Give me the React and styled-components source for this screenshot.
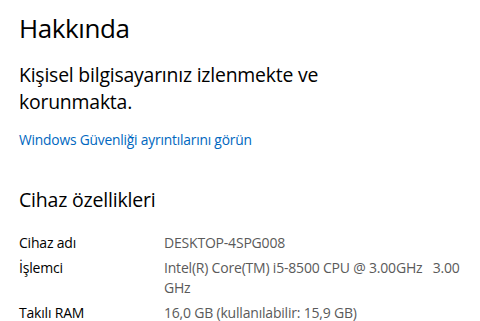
import React from 'react'
import styled, { createGlobalStyle } from 'styled-components'

const GlobalStyle = createGlobalStyle`
  html, body {
    margin: 0;
    padding: 0;
    background: #ffffff;
  }
  body {
    font-family: 'Open Sans', 'Noto Sans', sans-serif;
    color: #000000;
  }
`

const Page = styled.div`
  width: 480px;
  height: 321px;
  overflow: hidden;
  padding: 8px 0 0 19px;
  box-sizing: border-box;
`

const Title = styled.h1`
  margin: 0;
  font-size: 26px;
  font-weight: 400;
  line-height: 40px;
  letter-spacing: -0.4px;
`

const Status = styled.p`
  margin: 13px 0 0;
  width: 320px;
  font-size: 19.4px;
  font-weight: 400;
  line-height: 27px;
  letter-spacing: -0.2px;
`

const Link = styled.a`
  display: inline-block;
  margin-top: 15px;
  color: #0067c0;
  font-size: 13.8px;
  line-height: 20px;
  text-decoration: none;
  letter-spacing: -0.2px;
  cursor: pointer;
`

const SectionTitle = styled.h2`
  margin: 36px 0 0;
  font-size: 19.5px;
  font-weight: 400;
  line-height: 28px;
  letter-spacing: -0.2px;
`

const Specs = styled.dl`
  margin: 19px 0 0;
  display: grid;
  grid-template-columns: 145px 305px;
  row-gap: 5px;
  font-size: 14px;
  line-height: 20px;
  letter-spacing: -0.2px;
`

const Label = styled.dt`
  margin: 0;
  color: #000000;
`

const Value = styled.dd`
  margin: 0;
  color: #5a5a5a;
  white-space: pre-wrap;
`

const specs = [
  ['Cihaz adı', 'DESKTOP-4SPG008'],
  ['İşlemci', 'Intel(R) Core(TM) i5-8500 CPU @ 3.00GHz   3.00 GHz'],
  ['Takılı RAM', '16,0 GB (kullanılabilir: 15,9 GB)'],
]

export default function App() {
  return (
    <>
      <GlobalStyle />
      <Page>
        <Title>Hakkında</Title>
        <Status>Kişisel bilgisayarınız izlenmekte ve korunmakta.</Status>
        <Link>Windows Güvenliği ayrıntılarını görün</Link>
        <SectionTitle>Cihaz özellikleri</SectionTitle>
        <Specs>
          {specs.map(([label, value]) => (
            <React.Fragment key={label}>
              <Label>{label}</Label>
              <Value>{value}</Value>
            </React.Fragment>
          ))}
        </Specs>
      </Page>
    </>
  )
}
